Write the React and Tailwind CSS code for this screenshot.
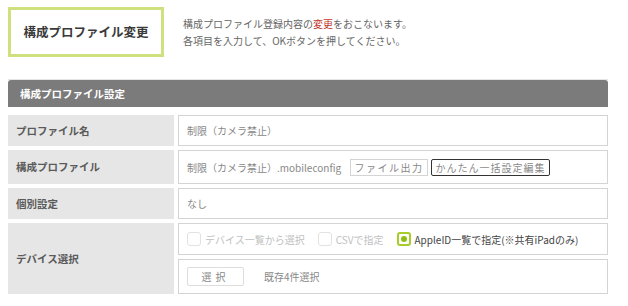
import React from 'react';

const Label = ({ children, className = '' }) => (
  <div className={`flex items-center bg-[#e6e6e6] pl-2 text-[10.5px] font-bold text-[#5a5a5a] ${className}`}>
    {children}
  </div>
);

const Box = ({ children, className = '' }) => (
  <div className={`flex items-center border border-[#d4d4d4] bg-white pl-2 text-[10px] text-[#888] ${className}`}>
    {children}
  </div>
);

const Check = ({ label }) => (
  <div className="flex items-center gap-1 text-[#c0c0c0]">
    <span className="inline-block h-[14px] w-[14px] rounded-[3px] border border-[#e2e2e2]" />
    <span>{label}</span>
  </div>
);

const App = () => {
  return (
    <div
      className="h-[306px] w-[628px] overflow-hidden bg-white"
      style={{ fontFamily: '"Noto Sans CJK JP", "Noto Sans", sans-serif' }}
    >
      <div className="flex items-start pl-2 pt-[7px]">
        <div className="flex h-[50px] w-[156px] items-center justify-center border-[3px] border-[#cfe07f] text-[12.5px] font-bold text-[#3a3a3a]">
          構成プロファイル変更
        </div>
        <div className="ml-[19px] mt-[8px] text-[10px] leading-[17px] text-[#666]">
          <p>
            構成プロファイル登録内容の<span className="text-[#c0392b]">変更</span>をおこないます。
          </p>
          <p>各項目を入力して、OKボタンを押してください。</p>
        </div>
      </div>

      <div className="mx-2 mt-[22px] w-[600px]">
        <div className="h-px bg-[#e4e4e4]" />
        <div className="flex h-[27px] items-center rounded-t-[3px] bg-[#7b7b7b] pl-3 text-[10.5px] font-bold text-white">
          構成プロファイル設定
        </div>

        <div className="mt-2 grid grid-cols-[166px_430px] gap-x-1 gap-y-1">
          <Label className="h-[31px]">プロファイル名</Label>
          <Box className="h-[31px]">制限（カメラ禁止）</Box>

          <Label className="h-[34px]">構成プロファイル</Label>
          <Box className="h-[34px] gap-[9px]">
            <span>制限（カメラ禁止）.mobileconfig</span>
            <div className="flex gap-[3px]">
              <button className="h-[17px] w-[78px] border border-[#d4d4d4] bg-white text-[10px] tracking-[1.5px] text-[#888]">
                ファイル出力
              </button>
              <button className="h-[17px] w-[119px] rounded-[2px] border-[1.5px] border-[#333] bg-white text-[10px] tracking-[1px] text-[#888]">
                かんたん一括設定編集
              </button>
            </div>
          </Box>

          <Label className="h-[31px]">個別設定</Label>
          <Box className="h-[31px]">なし</Box>

          <Label className="h-[71px]">デバイス選択</Label>
          <div className="flex flex-col gap-1">
            <Box className="h-[32px] gap-[13px]">
              <Check label="デバイス一覧から選択" />
              <Check label="CSVで指定" />
              <div className="flex items-center gap-1 text-[#444]">
                <span className="flex h-[14px] w-[14px] items-center justify-center rounded-[3px] border-2 border-[#a8cc2a]">
                  <span className="h-[6px] w-[6px] rounded-full bg-[#8fbf12]" />
                </span>
                <span>AppleID一覧で指定(※共有iPadのみ)</span>
              </div>
            </Box>
            <Box className="h-[35px] gap-5">
              <button className="h-[19px] w-[57px] rounded-[2px] border border-[#ddd] bg-white text-[10px] tracking-[4px] text-[#888]">
                選択
              </button>
              <span>既存4件選択</span>
            </Box>
          </div>
        </div>
      </div>
    </div>
  );
};

export default App;
